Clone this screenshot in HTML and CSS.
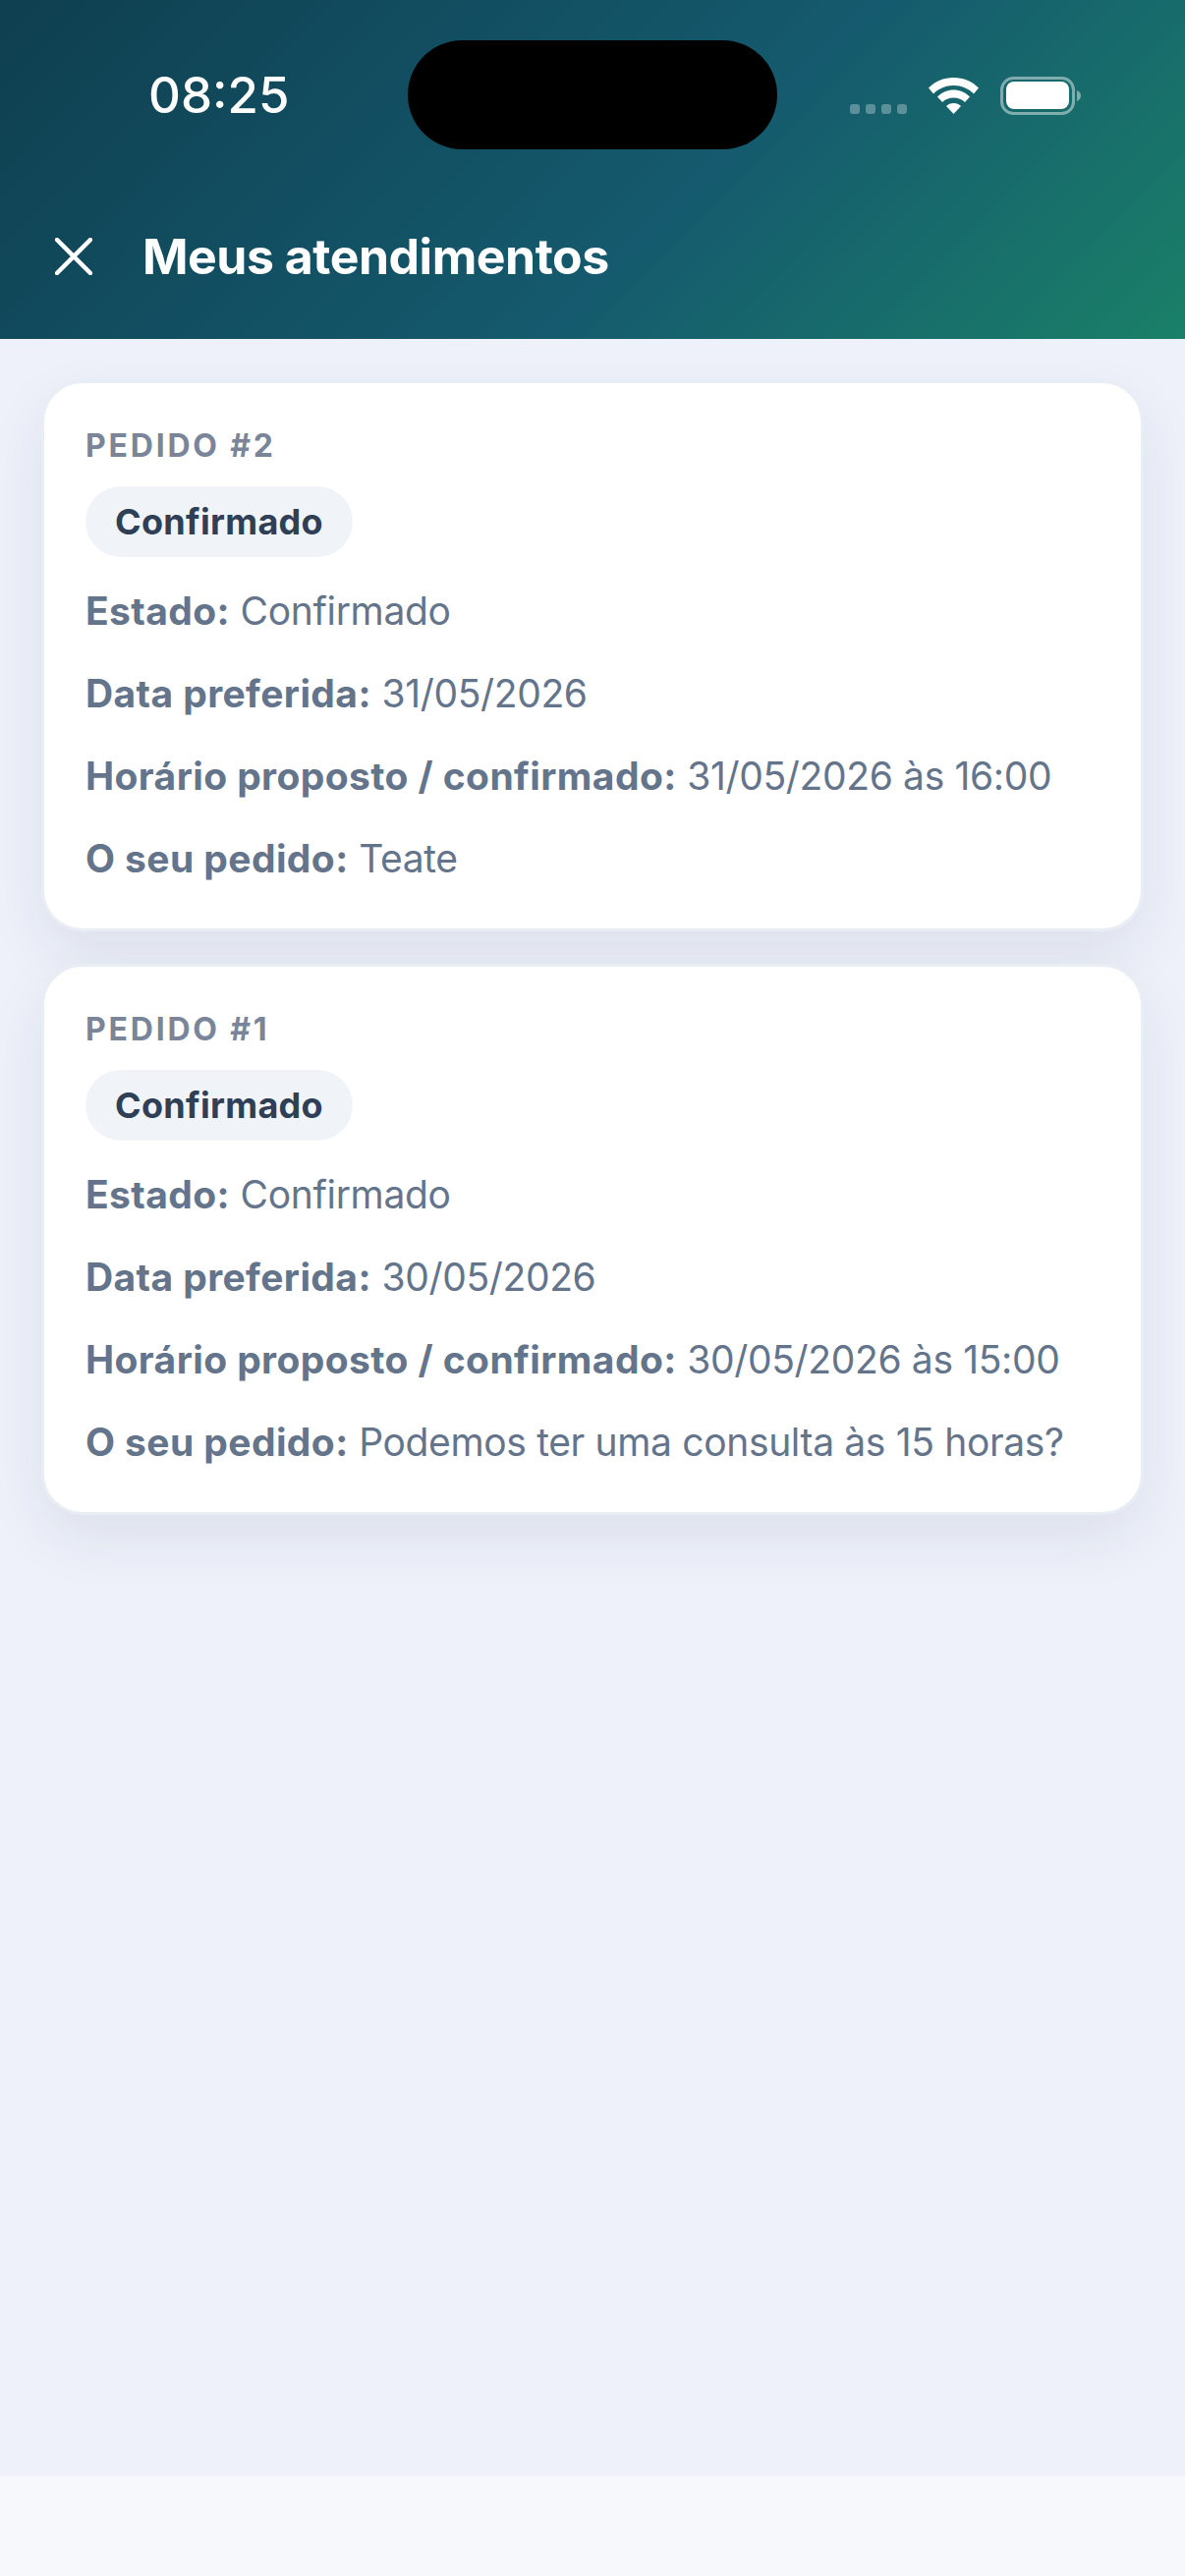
FILE: index.html
```html
<!DOCTYPE html>
<html lang="pt">
<head>
    <meta charset="UTF-8">
    <meta name="viewport" content="width=device-width, initial-scale=1.0">
    <title>Meus atendimentos</title>
    <link rel="stylesheet" href="styles.css">
</head>
<body>
    <header class="header">
        <div class="status-bar">
            <span class="time">08:25</span>
            <div class="island"></div>
            <div class="status-icons">
                <div class="signal"><i></i><i></i><i></i><i></i></div>
                <svg class="wifi" viewBox="0 0 51 37" fill="#fff">
                    <path d="M25.5 0C35.5 0 44.5 4 51 10.5L46 16.5C40.5 11 33.5 8 25.5 8C17.5 8 10.5 11 5 16.5L0 10.5C6.5 4 15.5 0 25.5 0Z"/>
                    <path d="M25.5 12.5C31.5 12.5 37.5 15 42 19.5L37 25C34 22 30 20.5 25.5 20.5C21 20.5 17 22 14 25L9 19.5C13.5 15 19.5 12.5 25.5 12.5Z"/>
                    <path d="M25.5 26C28.5 26 31 27 33 29L25.5 37L18 29C20 27 22.5 26 25.5 26Z"/>
                </svg>
                <svg class="battery" viewBox="0 0 82 39">
                    <rect x="1.5" y="1.5" width="73" height="36" rx="12" fill="none" stroke="#fff" stroke-opacity="0.45" stroke-width="3"/>
                    <rect x="6" y="5" width="64" height="28" rx="8" fill="#fff"/>
                    <path d="M78 14C80.5 15 82 17 82 19.5C82 22 80.5 24 78 25Z" fill="#fff" fill-opacity="0.45"/>
                </svg>
            </div>
        </div>
        <div class="app-bar">
            <svg class="close-icon" viewBox="0 0 38 38" fill="none" stroke="#fff" stroke-width="4.5" stroke-linecap="round">
                <path d="M2 2L36 36M36 2L2 36"/>
            </svg>
            <h1 class="title">Meus atendimentos</h1>
        </div>
    </header>

    <main class="content">
        <section class="card">
            <div class="order-label">PEDIDO #2</div>
            <span class="pill">Confirmado</span>
            <p class="info"><strong>Estado:</strong> Confirmado</p>
            <p class="info"><strong>Data preferida:</strong> 31/05/2026</p>
            <p class="info"><strong>Horário proposto / confirmado:</strong> 31/05/2026 às 16:00</p>
            <p class="info"><strong>O seu pedido:</strong> Teate</p>
        </section>
        <section class="card">
            <div class="order-label">PEDIDO #1</div>
            <span class="pill">Confirmado</span>
            <p class="info"><strong>Estado:</strong> Confirmado</p>
            <p class="info"><strong>Data preferida:</strong> 30/05/2026</p>
            <p class="info"><strong>Horário proposto / confirmado:</strong> 30/05/2026 às 15:00</p>
            <p class="info"><strong>O seu pedido:</strong> Podemos ter uma consulta às 15 horas?</p>
        </section>
    </main>

    <div class="bottom-bar"></div>
</body>
</html>
```

FILE: styles.css
```css
html, body {
    margin: 0;
    padding: 0;
}
body {
    height: 100vh;
    display: flex;
    flex-direction: column;
    background: #eef1fa;
    font-family: Inter, "Liberation Sans", sans-serif;
    overflow: hidden;
}
/* cabeçalho */
.header {
    height: 345px;
    flex-shrink: 0;
    background: linear-gradient(135deg, #0e3f50 0%, #155a6e 58%, #1a8068 100%);
    color: #fff;
}
.status-bar {
    display: flex;
    align-items: center;
    height: 111px;
    padding: 41px 0 0 151px;
}
.time {
    width: 264px;
    font-size: 51px;
    font-weight: 500;
}
.island {
    width: 376px;
    height: 111px;
    border-radius: 56px;
    background: #000;
}
.status-icons {
    display: flex;
    align-items: flex-end;
    height: 39px;
    margin-left: 74px;
    margin-top: 2px;
}
.signal {
    display: flex;
    gap: 6px;
    margin-right: 22px;
    margin-bottom: 1px;
}
.signal i {
    width: 10px;
    height: 10px;
    border-radius: 3px;
    background: rgba(255,255,255,0.3);
}
.wifi {
    width: 51px;
    height: 37px;
    margin-right: 22px;
    margin-bottom: 1px;
}
.battery {
    width: 82px;
    height: 39px;
}
.app-bar {
    display: flex;
    align-items: center;
    margin-top: 72px;
    padding-left: 56px;
    height: 73px;
}
.close-icon {
    width: 38px;
    height: 38px;
    margin-right: 51px;
}
.title {
    margin: 0;
    font-size: 50px;
    font-weight: 700;
    letter-spacing: -0.5px;
}
/* lista de pedidos */
.content {
    flex: 1;
    display: flex;
    flex-direction: column;
    gap: 33px;
    padding: 42px;
}
.card {
    box-sizing: border-box;
    height: 561px;
    padding: 45px 42px 44px;
    background: #fff;
    border: 3px solid #e9edf4;
    border-radius: 42px;
    box-shadow: 0 24px 60px rgba(20,35,60,0.08);
}
.order-label {
    font-size: 32px;
    line-height: 37px;
    font-weight: 700;
    letter-spacing: 2.8px;
    color: #7a8599;
}
.pill {
    display: inline-block;
    margin-top: 23px;
    padding: 0 30px;
    height: 72px;
    line-height: 72px;
    border-radius: 36px;
    background: #f0f4f9;
    font-size: 36px;
    font-weight: 700;
    letter-spacing: 0.3px;
    color: #2f3f55;
}
.info {
    margin: 30px 0 0;
    font-size: 39px;
    font-weight: 380;
    line-height: 54px;
    letter-spacing: -0.35px;
    color: #64748b;
}
.pill + .info {
    margin-top: 28px;
}
.info strong {
    font-weight: 700;
    letter-spacing: 0.4px;
}
.bottom-bar {
    height: 102px;
    flex-shrink: 0;
    background: #f7f8fc;
}
```
